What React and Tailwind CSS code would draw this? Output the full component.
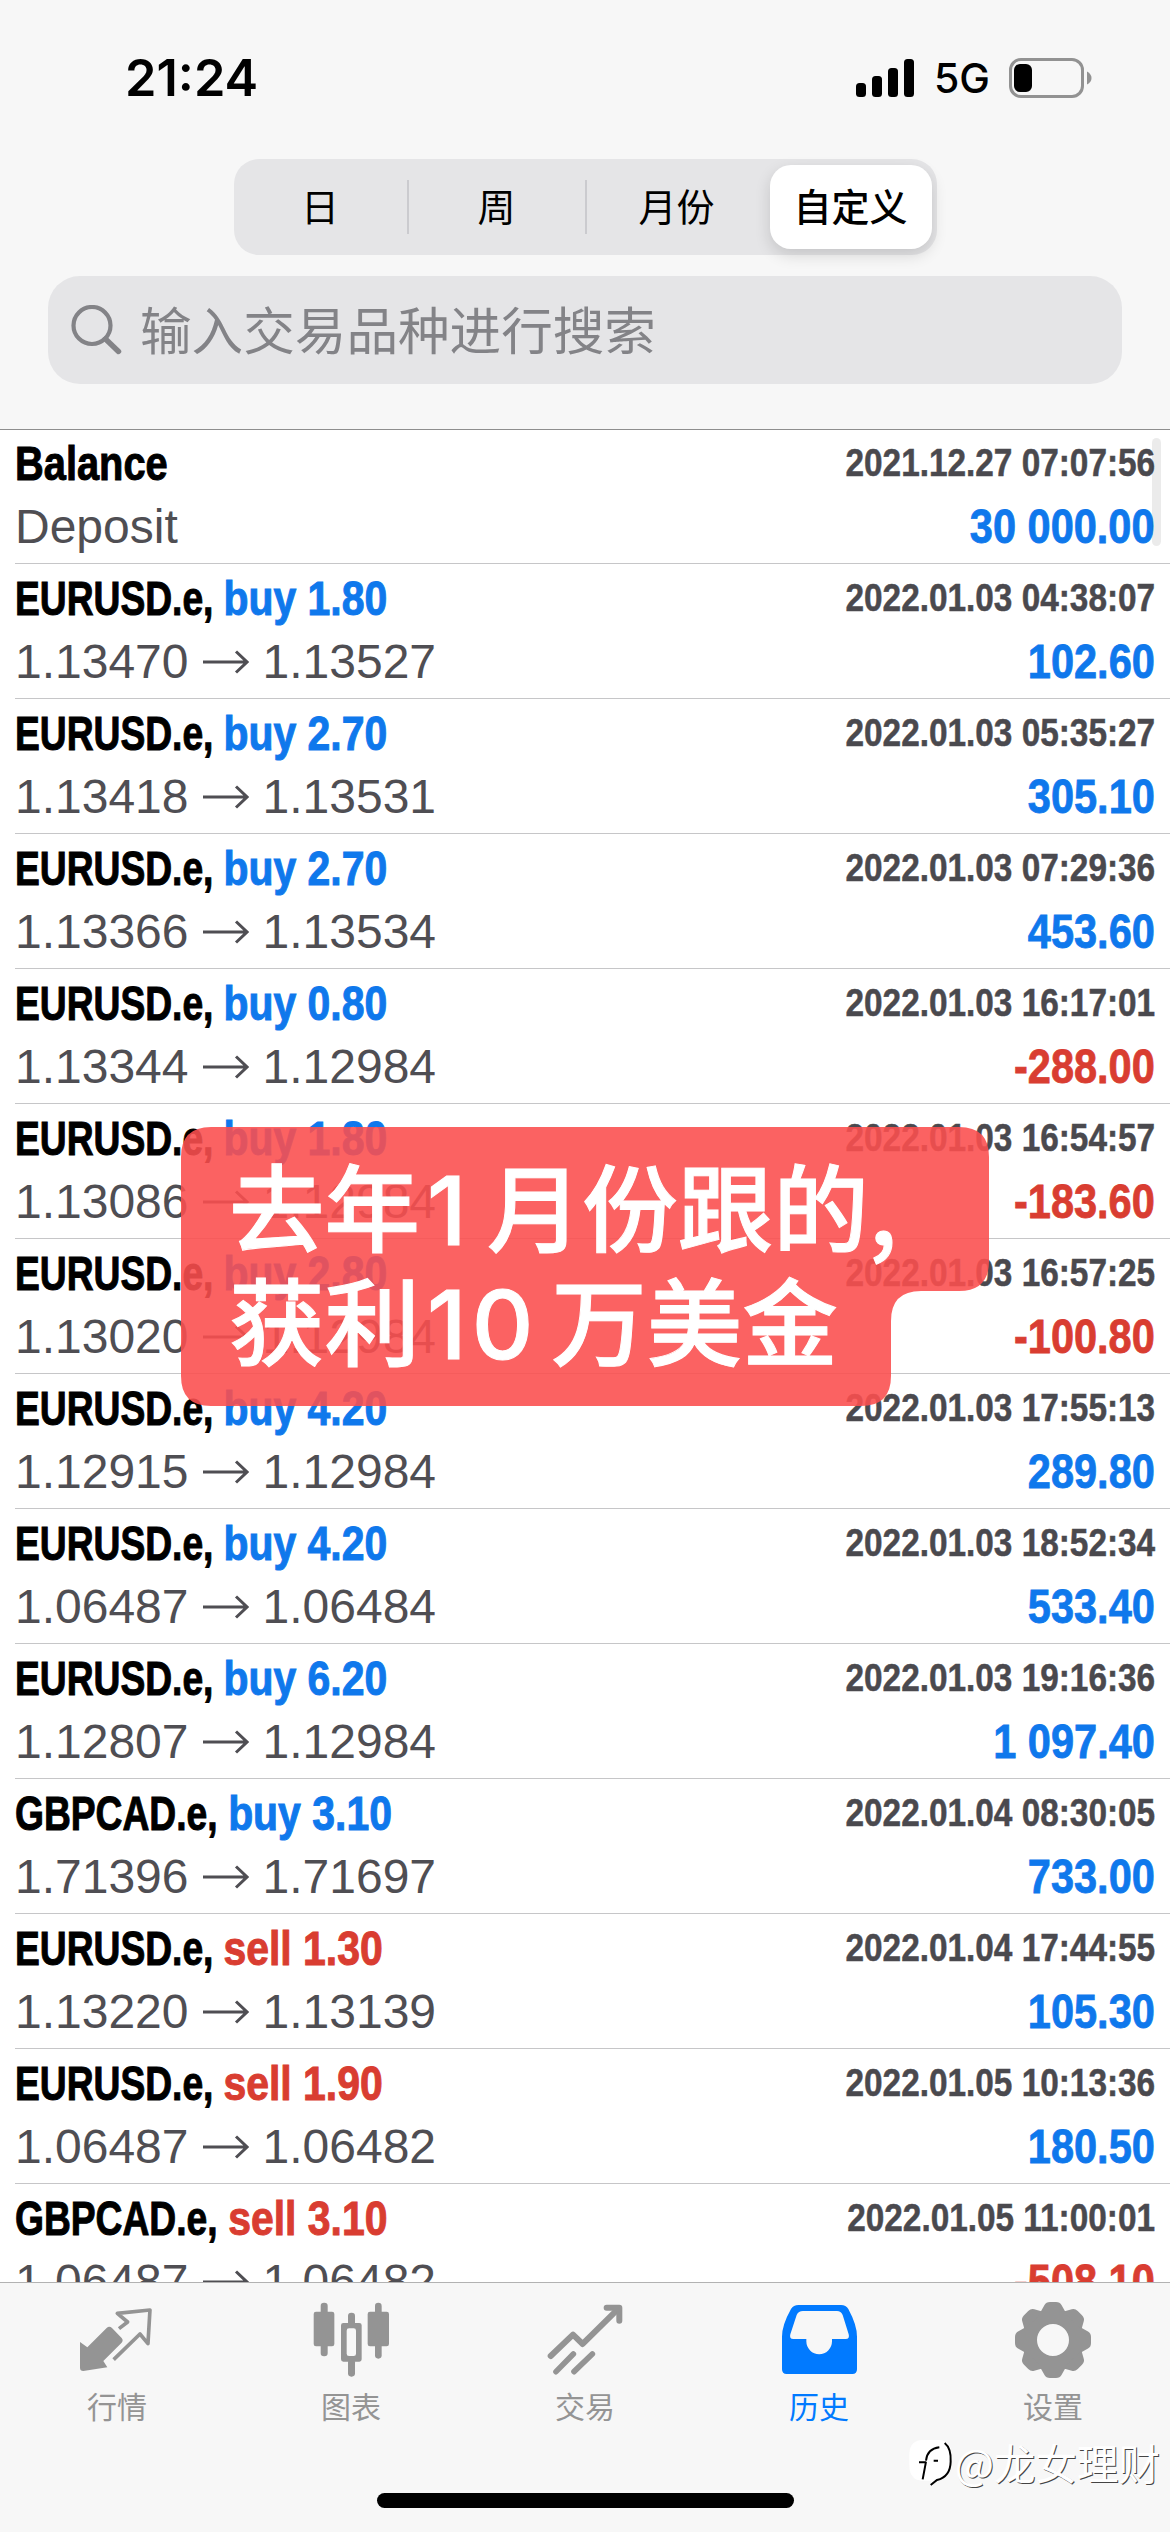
import { clsx } from 'clsx';

const history = [
  { symbol: 'EURUSD.e', side: 'buy', volume: '1.80', time: '2022.01.03 04:38:07', open: '1.13470', close: '1.13527', profit: '102.60' },
  { symbol: 'EURUSD.e', side: 'buy', volume: '2.70', time: '2022.01.03 05:35:27', open: '1.13418', close: '1.13531', profit: '305.10' },
  { symbol: 'EURUSD.e', side: 'buy', volume: '2.70', time: '2022.01.03 07:29:36', open: '1.13366', close: '1.13534', profit: '453.60' },
  { symbol: 'EURUSD.e', side: 'buy', volume: '0.80', time: '2022.01.03 16:17:01', open: '1.13344', close: '1.12984', profit: '-288.00' },
  { symbol: 'EURUSD.e', side: 'buy', volume: '1.80', time: '2022.01.03 16:54:57', open: '1.13086', close: '1.12984', profit: '-183.60' },
  { symbol: 'EURUSD.e', side: 'buy', volume: '2.80', time: '2022.01.03 16:57:25', open: '1.13020', close: '1.12984', profit: '-100.80' },
  { symbol: 'EURUSD.e', side: 'buy', volume: '4.20', time: '2022.01.03 17:55:13', open: '1.12915', close: '1.12984', profit: '289.80' },
  { symbol: 'EURUSD.e', side: 'buy', volume: '4.20', time: '2022.01.03 18:52:34', open: '1.06487', close: '1.06484', profit: '533.40' },
  { symbol: 'EURUSD.e', side: 'buy', volume: '6.20', time: '2022.01.03 19:16:36', open: '1.12807', close: '1.12984', profit: '1 097.40' },
  { symbol: 'GBPCAD.e', side: 'buy', volume: '3.10', time: '2022.01.04 08:30:05', open: '1.71396', close: '1.71697', profit: '733.00' },
  { symbol: 'EURUSD.e', side: 'sell', volume: '1.30', time: '2022.01.04 17:44:55', open: '1.13220', close: '1.13139', profit: '105.30' },
  { symbol: 'EURUSD.e', side: 'sell', volume: '1.90', time: '2022.01.05 10:13:36', open: '1.06487', close: '1.06482', profit: '180.50' },
  { symbol: 'GBPCAD.e', side: 'sell', volume: '3.10', time: '2022.01.05 11:00:01', open: '1.06487', close: '1.06482', profit: '-508.10' },
];

const StatusBar = () => (
  <div className="flex h-[159px] items-start justify-between pt-[47px] pr-[78px] pl-[125px]">
    <span className="font-['Inter'] text-[50.5px] leading-[62px] font-semibold">21:24</span>
    <div className="flex items-center pt-[11px]">
      <svg width="58" height="38" viewBox="0 0 58 38">
        <rect x="0" y="24" width="10" height="14" rx="3.5" />
        <rect x="16" y="17" width="10" height="21" rx="3.5" />
        <rect x="32" y="9" width="10" height="29" rx="3.5" />
        <rect x="48" y="0" width="10" height="38" rx="3.5" />
      </svg>
      <span className="ml-[20px] w-[75px] font-['Inter'] text-[41px] leading-[40px] font-medium">5G</span>
      <svg width="83" height="40" viewBox="0 0 83 40">
        <rect x="1.5" y="1.5" width="72" height="37" rx="10.5" fill="none" stroke="#929292" strokeWidth="3" />
        <rect x="5" y="6" width="18" height="28" rx="6" />
        <path d="M78 13.5 Q82.5 16 82.5 20 T78 26.5Z" fill="#929292" />
      </svg>
    </div>
  </div>
);

const PeriodTabs = () => (
  <div className="mx-auto flex h-[96px] w-[703px] items-center rounded-[25px] bg-[#e5e5e7] pr-[5px] text-[38px]">
    <div className="w-[173px] pb-[4px] text-center leading-[54px]">日</div>
    <div className="h-[54px] w-[2px] bg-[#cbcbcf]"></div>
    <div className="w-[176px] pb-[4px] text-center leading-[54px]">周</div>
    <div className="h-[54px] w-[2px] bg-[#cbcbcf]"></div>
    <div className="flex-1 pr-[3px] pb-[4px] text-center leading-[54px]">月份</div>
    <div className="h-[84px] w-[162px] rounded-[21px] bg-white text-center leading-[80px] font-medium shadow-[0_6px_16px_rgba(0,0,0,0.14)]">
      自定义
    </div>
  </div>
);

const SearchBox = () => (
  <div className="mx-[48px] mt-[21px] flex h-[108px] items-center rounded-[32px] bg-[#e5e5e7] pl-[23px] text-[#838387]">
    <svg width="51" height="50" viewBox="0 0 51 50" fill="none" stroke="currentColor">
      <circle cx="21" cy="20.5" r="18.5" strokeWidth="4.2" />
      <path d="M34.5 34 L47.5 46.5" strokeWidth="5.4" strokeLinecap="round" />
    </svg>
    <span className="ml-[18px] pb-[4px] text-[51.6px] leading-[104px]">输入交易品种进行搜索</span>
  </div>
);

const Arrow = () => (
  <svg className="mr-[14px] ml-[14px]" width="46" height="24" viewBox="0 0 46 24" fill="none" stroke="currentColor" strokeWidth="3">
    <path d="M0 12 H44 M33 1.5 L44 12 L33 22.5" />
  </svg>
);

const Row = ({ title, time, detail, profit }) => (
  <div className="ml-[15px] h-[135px] shrink-0 border-b border-[#c6c6c8] pt-[3px] pr-[15px]">
    <div className="flex h-[63px] justify-between leading-[63px] font-bold whitespace-pre">
      <span className="origin-left scale-x-[0.775] text-[48px] [-webkit-text-stroke:1px_currentColor]">{title}</span>
      <span className="origin-right scale-x-[0.855] text-[39px] leading-[61px] text-[#4a494e] [-webkit-text-stroke:0.5px_currentColor]">
        {time}
      </span>
    </div>
    <div className="flex h-[63px] justify-between text-[48px] leading-[63px]">
      <span className="flex items-center text-[#4f4e53]">{detail}</span>
      <span
        className={clsx(
          'origin-right scale-x-[0.865] font-bold [-webkit-text-stroke:0.8px_currentColor]',
          profit.startsWith('-') ? 'text-[#d93d31]' : 'text-[#0f78ec]'
        )}
      >
        {profit}
      </span>
    </div>
  </div>
);

const HistoryList = () => (
  <div className="relative -mt-px flex flex-1 flex-col overflow-hidden font-['Liberation_Sans',sans-serif]">
    <Row
      title={<span className="inline-block origin-left scale-x-[1.07]">Balance</span>}
      time="2021.12.27 07:07:56"
      detail="Deposit"
      profit="30 000.00"
    />
    {history.map((deal) => (
      <Row
        key={deal.time}
        title={
          <>
            {deal.symbol},{' '}
            <span
              className={clsx(
                'inline-block origin-left scale-x-[1.1]',
                deal.side === 'buy' ? 'text-[#0f78ec]' : 'text-[#d93d31]'
              )}
            >
              {deal.side} {deal.volume}
            </span>
          </>
        }
        time={deal.time}
        detail={
          <>
            {deal.open}
            <Arrow />
            {deal.close}
          </>
        }
        profit={deal.profit}
      />
    ))}
    {/* Scroll indicator */}
    <div className="absolute top-[9px] right-[9px] h-[108px] w-[9px] rounded-full bg-black/8"></div>
  </div>
);

const QuotesIcon = () => (
  <svg width="73.3" height="65.3" viewBox="60 50 220 196">
    <path
      d="M60 155 L82 171 L140 113 Q148 105 156 113 L185 143 Q191 150 185 157 L130 212 L142 231 L70 242 Q60 242 60 232Z"
      fill="currentColor"
    />
    <path
      d="M177 115 L203 95 L172 69 L270 59 L264 160 L240 131 L161 208"
      fill="none"
      stroke="currentColor"
      strokeWidth="11"
      strokeLinejoin="round"
    />
  </svg>
);

const ChartIcon = () => (
  <svg width="76.7" height="75.3" viewBox="757 34 230 226" fill="currentColor">
    <rect x="780" y="36" width="21" height="161" rx="10" />
    <rect x="759" y="63" width="62" height="104" rx="7" />
    <rect x="943" y="36" width="20" height="168" rx="10" />
    <rect x="921" y="63" width="64" height="104" rx="7" />
    <rect x="862" y="66" width="21" height="40" rx="10" />
    <rect x="862" y="205" width="21" height="53" rx="10" />
    <path
      fillRule="evenodd"
      d="M848 97 H896 Q903 97 903 104 V206 Q903 213 896 213 H848 Q841 213 841 206 V104 Q841 97 848 97Z M865 113 Q858 113 858 120 V189 Q858 196 865 196 H879 Q886 196 886 189 V120 Q886 113 879 113Z"
    />
  </svg>
);

const TradeIcon = () => (
  <svg width="76" height="71.3" viewBox="50 40 228 214" fill="none" stroke="currentColor" strokeLinecap="round" strokeLinejoin="round">
    <path d="M61 196 L128 132 L157 160 L265 53" strokeWidth="18" />
    <path d="M229 51 H267 V90" strokeWidth="18" />
    <path d="M77 243 L129 190 M131 243 L186 190" strokeWidth="17" />
  </svg>
);

const HistoryIcon = () => (
  <svg width="75" height="69" viewBox="753 45 225 207" fill="currentColor">
    <path
      fillRule="evenodd"
      d="M803 45 H930 Q945 45 952 57 Q978 105 978 140 V238 Q978 252 964 252 H767 Q753 252 753 238 V140 Q753 105 780 57 Q787 45 803 45Z M816 63 Q802 63 797 75 L778 133 Q774 147 787 147 H826 V154 A38.5 38.5 0 0 0 903 154 V147 H944 Q957 147 953 133 L935 75 Q930 63 918 63Z"
    />
  </svg>
);

const SettingsIcon = () => (
  <svg width="76" height="76" viewBox="-38 -38 76 76" fill="currentColor">
    <circle r="23.5" fill="none" stroke="currentColor" strokeWidth="15" />
    {[0, 45, 90, 135, 180, 225, 270, 315].map((angle) => (
      <path key={angle} transform={`rotate(${angle})`} d="M-13 -27 L-8.5 -35 Q-7 -38 -3 -38 H3 Q7 -38 8.5 -35 L13 -27Z" />
    ))}
  </svg>
);

const tabs = [
  { label: '行情', icon: QuotesIcon },
  { label: '图表', icon: ChartIcon },
  { label: '交易', icon: TradeIcon },
  { label: '历史', icon: HistoryIcon, active: true },
  { label: '设置', icon: SettingsIcon },
];

const TabBar = () => (
  <div className="h-[250px] border-t border-[#b2b2b2] bg-[#f7f7f7] pt-[4px]">
    <div className="flex">
      {tabs.map(({ label, icon: Icon, active }) => (
        <div key={label} className={clsx('flex flex-1 flex-col items-center', active ? 'text-[#017aff]' : 'text-[#949494]')}>
          <div className="flex h-[105px] items-center">
            <Icon />
          </div>
          <span className="text-[30px] leading-[26px]">{label}</span>
        </div>
      ))}
    </div>
    {/* Home indicator */}
    <div className="mx-auto mt-[75px] h-[15px] w-[417px] rounded-full bg-black"></div>
  </div>
);

const Caption = () => (
  <div className="absolute top-[1127px] left-[181px] h-[279px] w-[808px]">
    <svg className="absolute inset-0" width="808" height="279" viewBox="0 0 808 279">
      <path
        d="M30 0 H778 Q808 0 808 30 V134 Q808 164 778 164 H740 Q710 164 710 194 V249 Q710 279 680 279 H30 Q0 279 0 249 V30 Q0 0 30 0Z"
        fill="#fa4f4f"
        fillOpacity="0.89"
      />
    </svg>
    <div className="relative pt-[20px] pl-[48px] font-['Noto_Sans_CJK_SC',sans-serif] text-[95.5px] leading-[114px] font-medium whitespace-nowrap text-white [-webkit-text-stroke:1px_#fff]">
      <div className="h-[114px]">
        去年<span className="mr-[20px] ml-[7px] font-['Inter']">1</span>月份跟的,
      </div>
      <div className="h-[114px]">
        获利<span className="mr-[13px] ml-[7px] font-['Inter'] tracking-[5px]">10</span>万美金
      </div>
    </div>
  </div>
);

const Watermark = () => (
  <div className="absolute right-[10px] bottom-[44px] flex items-center">
    <svg width="46" height="50" viewBox="18 134 138 150" fill="none" stroke="#000" strokeWidth="6">
      <path d="M60 140 H110 Q148 142 148 180 V215 Q145 255 105 260 L86 276 L88 262 H60 Q22 260 22 215 V180 Q24 142 60 140Z" fill="#fff" stroke="none" />
      <path d="M128 149 Q148 165 146 205 Q145 250 105 260 L86 275" />
      <path d="M62 258 L72 205 M51 207 H72 M72 202 Q76 166 112 162 M95 202 H108" />
    </svg>
    <span className="ml-[1px] pb-[2px] text-[41.5px] leading-[48px] text-white [text-shadow:1px_1px_0_#444]">@龙女理财</span>
  </div>
);

export default function App() {
  return (
    <div className="relative flex h-[2532px] w-[1170px] flex-col overflow-hidden bg-white font-['Noto_Sans_CJK_SC',sans-serif] text-black">
      <div className="h-[430px] shrink-0 border-b border-[#8e8e8e] bg-[#f7f7f7]">
        <StatusBar />
        <PeriodTabs />
        <SearchBox />
      </div>
      <HistoryList />
      <TabBar />
      <Caption />
      <Watermark />
    </div>
  );
}
